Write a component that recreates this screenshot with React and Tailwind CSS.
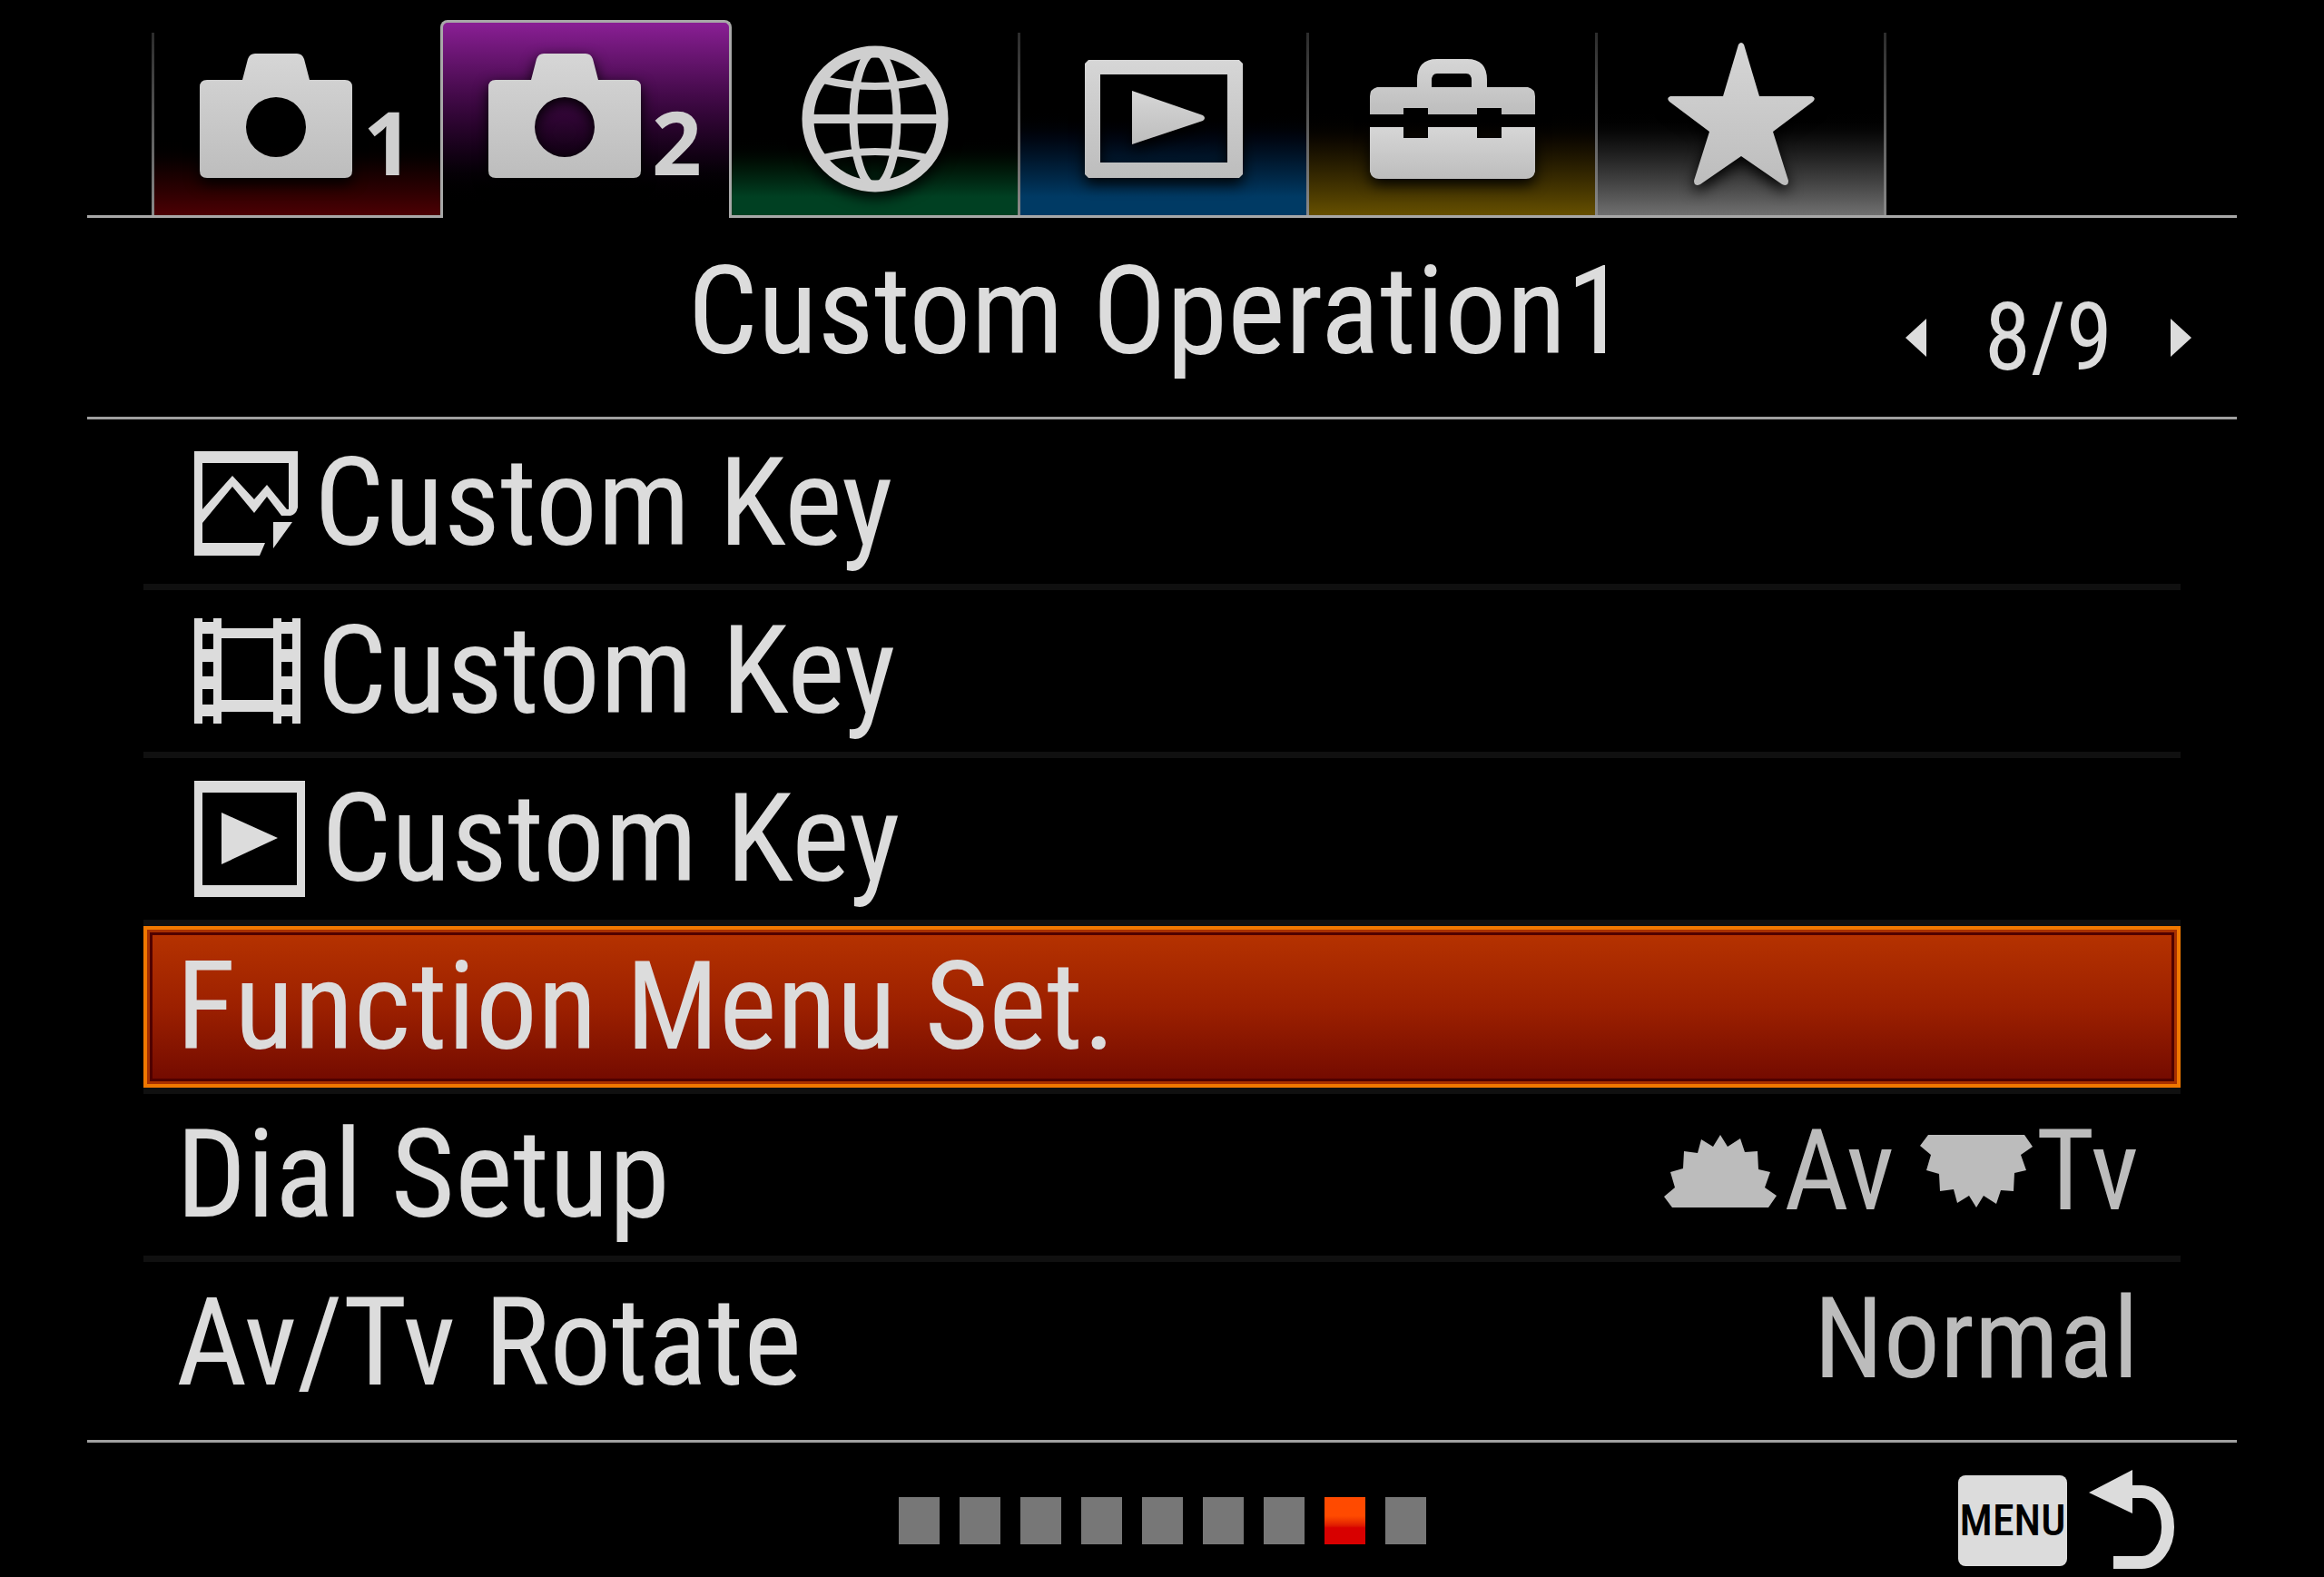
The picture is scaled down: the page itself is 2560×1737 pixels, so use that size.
import { useState } from 'react'
import clsx from 'clsx'

const CameraIcon = () => (
    <svg className="w-[168px] h-[138px] shrink-0 drop-shadow-[0_6px_8px_#000]" viewBox="0 0 168 138" fill="url(#metal)">
        <path fillRule="evenodd" d="M8 30H47L53 7Q55 1 61 1H107Q113 1 115 7L121 30H160Q168 30 168 38V130Q168 138 160 138H8Q0 138 0 130V38Q0 30 8 30ZM84 49A33 33 0 1 0 84 115A33 33 0 1 0 84 49Z" />
    </svg>
)

const GlobeIcon = () => (
    <svg className="w-[162px] h-[162px] drop-shadow-[0_6px_8px_#000]" viewBox="0 0 162 162" fill="none" stroke="#cfcfcf">
        <circle cx="81" cy="81" r="74" strokeWidth="13" />
        <ellipse cx="81" cy="81" rx="24" ry="74" strokeWidth="9" />
        <path d="M8 81H154" strokeWidth="10" />
        <path d="M24 38Q81 52 138 38M24 124Q81 110 138 124" strokeWidth="8" />
    </svg>
)

const PlaybackIcon = () => (
    <svg className="w-[174px] h-[130px] drop-shadow-[0_6px_8px_#000]" viewBox="0 0 174 130" fill="url(#metal)">
        <path fillRule="evenodd" d="M4 0H170L174 4V126L170 130H4L0 126V4ZM17 16V113H157V16Z" />
        <path d="M52 34L130 61Q134 64 130 67L52 93Z" />
    </svg>
)

const ToolboxIcon = () => (
    <svg className="w-[182px] h-[132px] drop-shadow-[0_6px_8px_#000]" viewBox="0 0 182 132" fill="url(#metal)">
        <path fillRule="evenodd" d="M8 31H52V23Q52 0 74 0H107Q129 0 129 23V31H174Q182 33 182 41V61H145V54H118V61H64V54H37V61H0V41Q0 33 8 31ZM68 31H112V24Q112 16 106 16H74Q68 16 68 24Z" />
        <path d="M0 75H37V87H64V75H118V87H145V75H182V124Q180 132 172 132H10Q2 132 0 124Z" />
    </svg>
)

const StarIcon = () => (
    <svg className="w-[164px] h-[170px] drop-shadow-[0_6px_8px_#000]" viewBox="0 0 164 170" fill="url(#metal)">
        <path d="M79 3Q82 -1 85 3L102 60H160Q165 62 161 66L117 99L134 153Q134 160 127 157L82 126L37 157Q30 160 30 153L47 99L3 66Q-1 62 4 60H62Z" />
    </svg>
)

const StillIcon = () => (
    <svg className="w-[114px] h-[115px]" viewBox="0 0 114 115" fill="#dcdcdc">
        <path fillRule="evenodd" d="M0 0H114V62Q112 70 106 71H96L80 50L66 68L42 39L9 79V101H78L72 115H0ZM9 13V64L42 27L66 53L80 37L102 64H104V13Z" />
        <path d="M87 78H108L87 107Z" />
    </svg>
)

const MovieIcon = () => (
    <svg className="w-[117px] h-[116px]" viewBox="0 0 117 116" fill="#dcdcdc">
        <path fillRule="evenodd" d="M0 0H9V4H21V0H30V11H87V0H96V4H108V0H117V116H108V108H96V116H87V103H30V116H21V108H9V116H0ZM30 22V90H87V22ZM9 17V34H21V17ZM9 48V64H21V48ZM9 78V95H21V78ZM96 17V34H108V17ZM96 48V64H108V48ZM96 78V95H108V78Z" />
    </svg>
)

const PlayIcon = () => (
    <svg className="w-[122px] h-[128px]" viewBox="0 0 122 128" fill="#dcdcdc">
        <path fillRule="evenodd" d="M0 0H122V128H0ZM9 13V115H113V13Z" />
        <path d="M30 35L92 63L30 92Z" />
    </svg>
)

const DialIcon = ({ flipped }) => (
    <svg className={clsx("w-[124px] h-[80px]", flipped && "-scale-y-100")} viewBox="0 0 124 80" fill="#bcbcbc">
        <path d="M9 80H115L124 67L111 58L117 41L104 38L103 18L89 19L84 4L70 13L62 0L54 13L41 5L37 20L22 18L21 37L7 41L12 58L0 68Z" />
    </svg>
)

const ReturnIcon = () => (
    <svg className="w-[94px] h-[112px]" viewBox="0 0 94 112">
        <path d="M0 25L48 0V48Z" fill="#dcdcdc" />
        <path d="M46 24H58A29 39 0 0 1 58 102H27" fill="none" stroke="#dcdcdc" strokeWidth="14" />
    </svg>
)

const tabs = [
    { id: "camera1", label: "Camera Settings 1", icon: <CameraIcon />, number: "1", glow: "from-[#4d0004] to-45%" },
    { id: "camera2", label: "Camera Settings 2", icon: <CameraIcon />, number: "2", glow: "from-[#4d0058] to-45%" },
    { id: "network", label: "Network", icon: <GlobeIcon />, glow: "from-[#004022] from-10% to-45%" },
    { id: "playback", label: "Playback", icon: <PlaybackIcon />, glow: "from-[#003a64] from-10% to-60%" },
    { id: "setup", label: "Setup", icon: <ToolboxIcon />, glow: "from-[#665000] to-60%" },
    { id: "mymenu", label: "My Menu", icon: <StarIcon />, glow: "from-[#707070] to-60%" },
];

const items = [
    { id: "still", label: "Custom Key", icon: <StillIcon /> },
    { id: "movie", label: "Custom Key", icon: <MovieIcon /> },
    { id: "play", label: "Custom Key", icon: <PlayIcon /> },
    { id: "fn", label: "Function Menu Set." },
    {
        id: "dial",
        label: "Dial Setup",
        value: (
            <>
                <DialIcon />
                <span className="pl-2 pr-7">Av</span>
                <DialIcon flipped />
                <span className="pl-1">Tv</span>
            </>
        ),
    },
    { id: "rotate", label: "Av/Tv Rotate", value: "Normal" },
];

const pages = [1, 2, 3, 4, 5, 6, 7, 8, 9];

const Tab = ({ tab, active, onSelect }) => (
    <button
        type="button"
        role="tab"
        aria-label={tab.label}
        aria-selected={active}
        onClick={onSelect}
        className={clsx(
            "flex min-w-0 cursor-pointer",
            active
                ? "z-10 -mr-[3px] h-[218px] rounded-t-lg border-x-3 border-t-3 border-[#a8a8a8] bg-linear-to-b from-[#8a1f95] to-black to-95%"
                : clsx("h-[204px] border-b-3 border-[#a8a8a8] bg-linear-to-t to-black", tab.glow)
        )}
    >
        {!active && <span className="w-[3px] self-stretch bg-linear-to-b from-[#2c2c2c] to-[#8a8a8a]" />}
        <span
            className={clsx(
                "flex flex-1 justify-center self-stretch",
                tab.number ? "items-end pl-[20px]" : "items-center pb-[12px]",
                tab.number && (active ? "pb-[44px]" : "pb-[41px]")
            )}
        >
            {tab.icon}
            {tab.number && (
                <span className="pl-3 font-['Open_Sans',sans-serif] text-[96px] leading-[80px] font-bold text-[#cfcfcf]">
                    {tab.number}
                </span>
            )}
        </span>
    </button>
)

const MenuRow = ({ item, selected, onSelect }) => (
    <li className="border-b-7 border-[#101010] last:border-b-0">
        <button
            type="button"
            onClick={onSelect}
            className={clsx(
                "flex min-h-[178px] w-full cursor-pointer items-center justify-between pr-[46px] pl-[36px] text-left",
                selected && "bg-linear-to-b from-[#b83400] via-[#9c2000] to-[#700800] shadow-[inset_0_0_0_4px_#f07800,inset_0_0_0_7px_#a83000,inset_0_0_0_10px_#500000]"
            )}
        >
            <span className={clsx("flex items-center gap-[18px] text-[136px] leading-[164px]", item.icon && "pl-[20px]")}>
                {item.icon}
                {item.label}
            </span>
            {item.value && (
                <span className="flex items-center pb-2 text-[124px] leading-[164px] text-[#bcbcbc]">{item.value}</span>
            )}
        </button>
    </li>
)

const App = () => {
    const [activeTab, setActiveTab] = useState("camera2");
    const [selected, setSelected] = useState("fn");
    const [page, setPage] = useState(8);

    return (
        <div className="flex min-h-screen flex-col bg-black px-24 pt-[22px] font-['Roboto_Condensed','Roboto',sans-serif] text-[#dcdcdc]">
            {/* shared fill for the tab icons */}
            <svg className="absolute size-0" aria-hidden="true">
                <linearGradient id="metal" x1="0" y1="0" x2="0" y2="1">
                    <stop offset="0" stopColor="#d6d6d6" />
                    <stop offset="1" stopColor="#bdbdbd" />
                </linearGradient>
            </svg>

            {/* --- TABS --- */}
            <div role="tablist" className="grid grid-cols-[71fr_repeat(6,318fr)_389fr] items-end">
                <span className="border-b-3 border-[#a8a8a8]" />
                {tabs.map(tab => (
                    <Tab key={tab.id} tab={tab} active={tab.id === activeTab} onSelect={() => setActiveTab(tab.id)} />
                ))}
                <span className="flex h-[204px] border-b-3 border-[#a8a8a8]">
                    <span className="w-[3px] bg-linear-to-b from-[#2c2c2c] to-[#8a8a8a]" />
                </span>
            </div>

            {/* --- TITLE + PAGER --- */}
            <header className="grid min-h-[222px] grid-cols-[1fr_auto_1fr] items-center border-b-3 border-[#a0a0a0]">
                <h1 className="col-start-2 pb-[14px] pr-[10px] text-[136px] leading-[164px]">Custom Operation1</h1>
                <div className="flex items-center justify-end gap-16 pt-[44px] pr-[50px]">
                    <button type="button" aria-label="Previous page" className="cursor-pointer" onClick={() => setPage(Math.max(1, page - 1))}>
                        <svg className="h-[42px] w-[23px]" viewBox="0 0 23 42" fill="#dcdcdc"><path d="M0 21L23 0V42Z" /></svg>
                    </button>
                    <span className="text-[104px] leading-[112px]">{page}/{pages.length}</span>
                    <button type="button" aria-label="Next page" className="cursor-pointer" onClick={() => setPage(Math.min(pages.length, page + 1))}>
                        <svg className="h-[42px] w-[23px]" viewBox="0 0 23 42" fill="#dcdcdc"><path d="M23 21L0 0V42Z" /></svg>
                    </button>
                </div>
            </header>

            {/* --- MENU ITEMS --- */}
            <ul className="px-[62px] pt-[3px] pb-[18px]">
                {items.map(item => (
                    <MenuRow key={item.id} item={item} selected={item.id === selected} onSelect={() => setSelected(item.id)} />
                ))}
            </ul>

            {/* --- FOOTER --- */}
            <footer className="grid flex-1 grid-cols-[1fr_auto_1fr] items-center border-t-3 border-[#a0a0a0]">
                <div className="col-start-2 flex gap-[22px] pt-[24px]">
                    {pages.map(n => (
                        <button
                            key={n}
                            type="button"
                            aria-label={`Page ${n}`}
                            onClick={() => setPage(n)}
                            className={clsx("h-[52px] w-[45px] cursor-pointer", n === page ? "bg-linear-to-b from-[#ff4a00] from-40% to-[#d80000] to-65%" : "bg-[#777777]")}
                        />
                    ))}
                </div>
                <button type="button" aria-label="Back" className="flex cursor-pointer items-center gap-6 justify-self-end pt-[24px] pr-[69px]">
                    <span className="flex h-[100px] w-[120px] items-center justify-center rounded-lg bg-[#dcdcdc] text-[48px] font-medium text-black">MENU</span>
                    <ReturnIcon />
                </button>
            </footer>
        </div>
    )
}

export default App
